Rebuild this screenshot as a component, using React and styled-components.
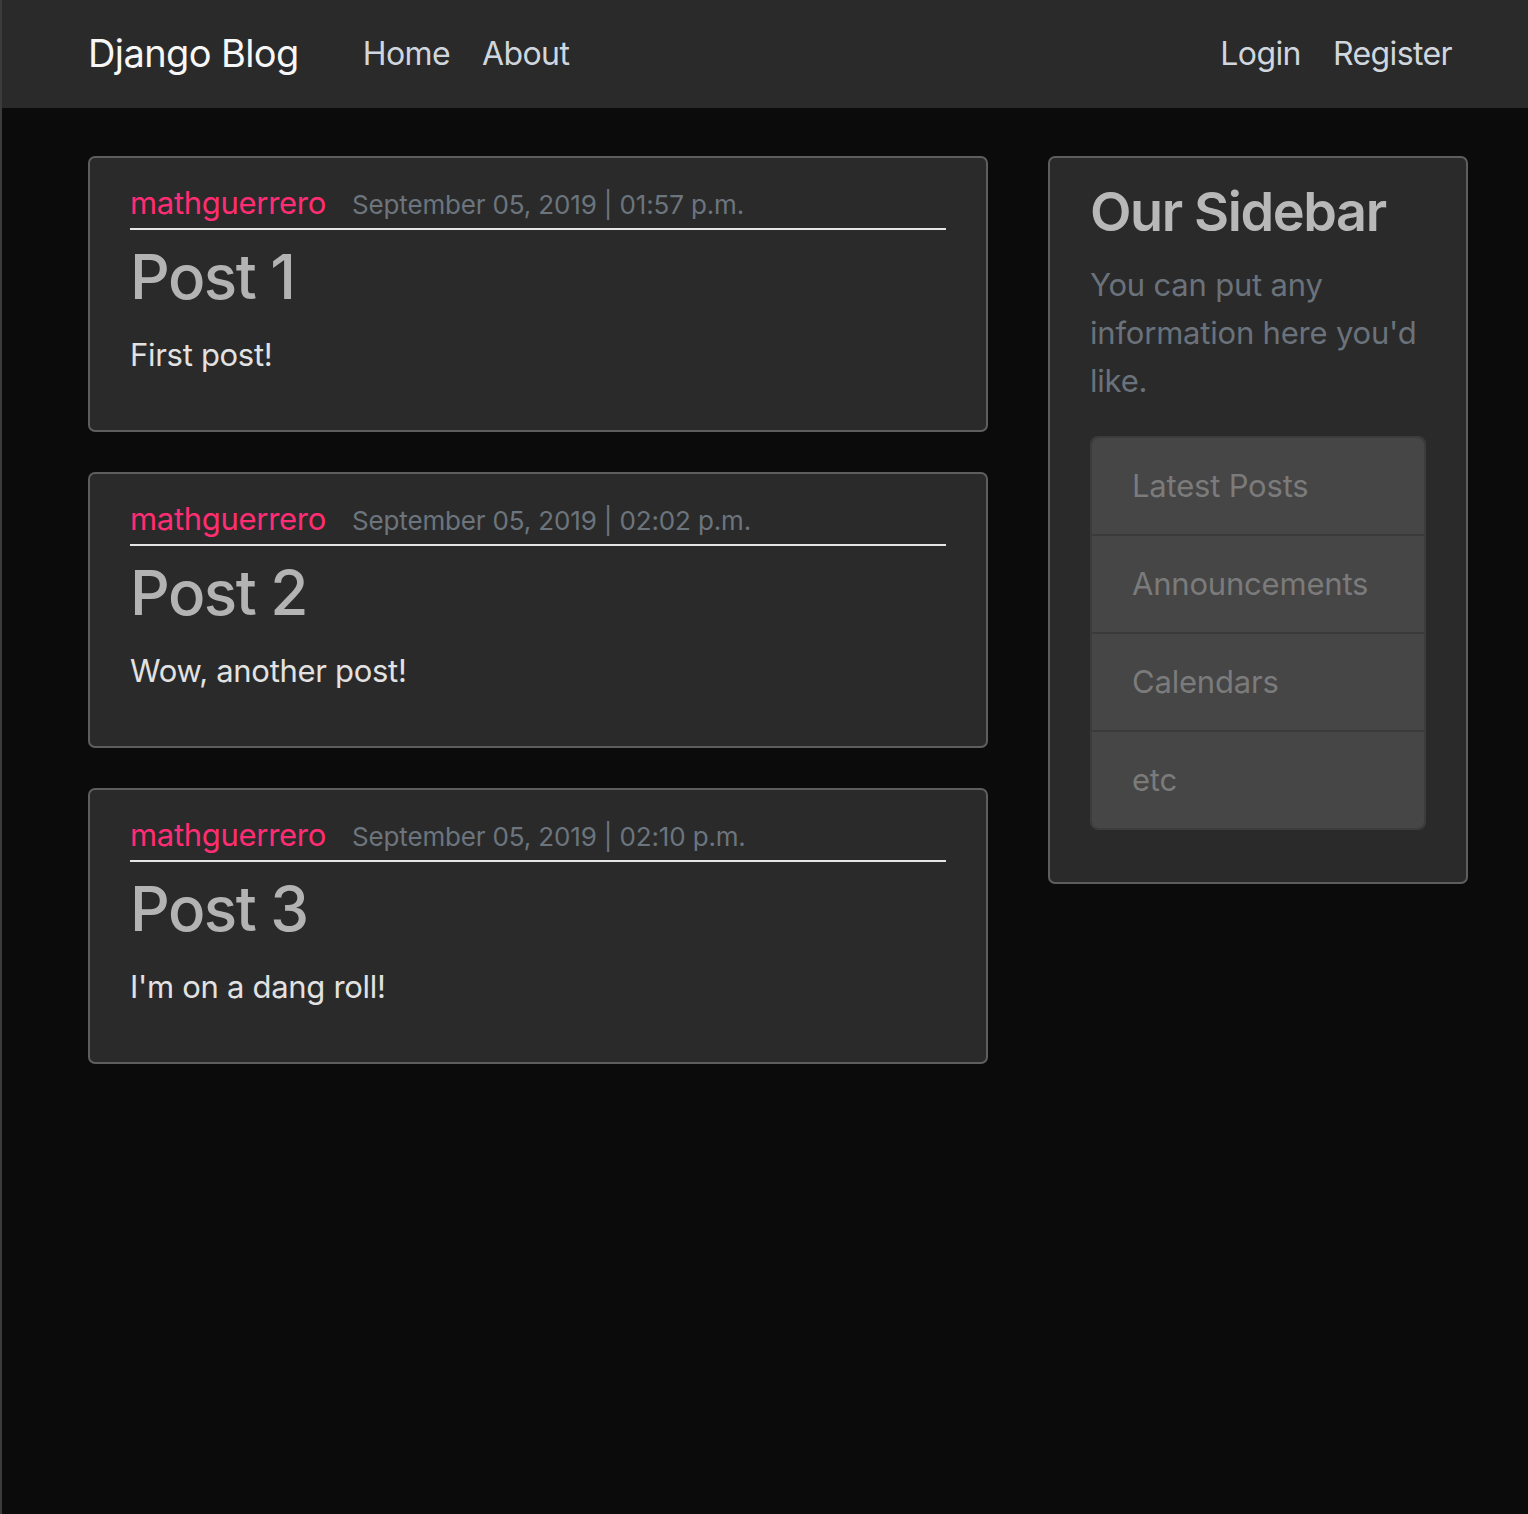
import React from "react";
import styled, { createGlobalStyle } from "styled-components";

const GlobalStyle = createGlobalStyle`
  html, body {
    margin: 0;
    padding: 0;
    background: #0b0b0b;
  }
  body {
    min-height: 1514px;
    border-left: 2px solid #3b3b3b;
    box-sizing: border-box;
    font-family: Inter, "Liberation Sans", sans-serif;
    color: #e0e0e0;
  }
`;

const Navbar = styled.nav`
  height: 108px;
  background-color: #2a2a2a;
`;

Navbar.Inner = styled.div`
  display: flex;
  align-items: center;
  height: 100%;
  width: 1380px;
  margin-left: 86px;
`;

Navbar.Brand = styled.a`
  font-size: 38px;
  color: #f7f7f7;
  margin-right: 64px;
  letter-spacing: -0.6px;
  padding-bottom: 2px;
`;

Navbar.Links = styled.div`
  display: flex;
  margin-left: ${(p) => (p.right ? "auto" : "0")};
`;

Navbar.Link = styled.a`
  font-size: 32px;
  color: #d0d6dd;
  padding: 0 16px 2px;
  letter-spacing: -0.6px;

  &:first-child {
    padding-left: ${(p) => (p.flush ? "0" : "16px")};
  }
`;

const Main = styled.main`
  display: flex;
  align-items: flex-start;
  gap: 60px;
  width: 1380px;
  margin: 48px 0 0 86px;
`;

const Column = styled.div`
  display: flex;
  flex-direction: column;
  gap: 40px;
  width: ${(p) => p.width}px;
`;

const Section = styled.article`
  background: #2a2a2a;
  border: 2px solid #5e5e5e;
  border-radius: 7px;
  padding: 20px 40px 51px;
`;

const Metadata = styled.div`
  display: flex;
  align-items: baseline;
  gap: 26px;
  margin-bottom: 8px;
  border-bottom: 2px solid #e6e6e6;
  line-height: 48px;
`;

const Author = styled.a`
  font-size: 31px;
  color: #ff2d72;
  letter-spacing: -0.3px;
  position: relative;
  top: 1px;
`;

const Muted = styled.small`
  font-size: 26px;
  color: #6c757d;
  letter-spacing: -0.15px;
  position: relative;
  top: 1px;
`;

const Title = styled.h2`
  margin: 0 0 16px;
  font-size: 62px;
  line-height: 77px;
  font-weight: 500;
  color: #b3b3b3;
  letter-spacing: -1.5px;
`;

const Content = styled.p`
  margin: 0;
  font-size: 31px;
  line-height: 48px;
  color: #e2e2e2;
  letter-spacing: -0.3px;
`;

const SidebarTitle = styled.h3`
  margin: 0 0 16px;
  font-size: 54px;
  line-height: 67px;
  font-weight: 600;
  color: #b8b8b8;
  letter-spacing: -1.4px;
`;

const SidebarText = styled.p`
  margin: 0 0 31px;
  font-size: 31px;
  line-height: 48px;
  color: #6a727b;
  letter-spacing: -0.2px;
`;

const ListGroup = styled.ul`
  list-style: none;
  margin: 0 0 1px;
  padding: 0;
  border-radius: 8px;
  overflow: hidden;
  border: 2px solid #3c3c3c;
`;

const ListItem = styled.li`
  background: #464646;
  color: #7b7b7b;
  font-size: 31px;
  line-height: 48px;
  padding: 24px 40px;
  letter-spacing: -0.2px;
  & + & {
    border-top: 2px solid #3a3a3a;
  }
`;

const posts = [
  { title: "Post 1", date: "September 05, 2019 | 01:57 p.m.", body: "First post!" },
  { title: "Post 2", date: "September 05, 2019 | 02:02 p.m.", body: "Wow, another post!" },
  { title: "Post 3", date: "September 05, 2019 | 02:10 p.m.", body: "I'm on a dang roll!" },
];

const sidebarLinks = ["Latest Posts", "Announcements", "Calendars", "etc"];

export default function App() {
  return (
    <>
      <GlobalStyle />
      <Navbar>
        <Navbar.Inner>
          <Navbar.Brand>Django Blog</Navbar.Brand>
          <Navbar.Links>
            <Navbar.Link flush>Home</Navbar.Link>
            <Navbar.Link>About</Navbar.Link>
          </Navbar.Links>
          <Navbar.Links right>
            <Navbar.Link>Login</Navbar.Link>
            <Navbar.Link>Register</Navbar.Link>
          </Navbar.Links>
        </Navbar.Inner>
      </Navbar>
      <Main>
        <Column width={900}>
          {posts.map((post) => (
            <Section key={post.title}>
              <Metadata>
                <Author>mathguerrero</Author>
                <Muted>{post.date}</Muted>
              </Metadata>
              <Title>{post.title}</Title>
              <Content>{post.body}</Content>
            </Section>
          ))}
        </Column>
        <Column width={420}>
          <Section>
            <SidebarTitle>Our Sidebar</SidebarTitle>
            <SidebarText>You can put any information here you'd like.</SidebarText>
            <ListGroup>
              {sidebarLinks.map((l) => (
                <ListItem key={l}>{l}</ListItem>
              ))}
            </ListGroup>
          </Section>
        </Column>
      </Main>
    </>
  );
}
